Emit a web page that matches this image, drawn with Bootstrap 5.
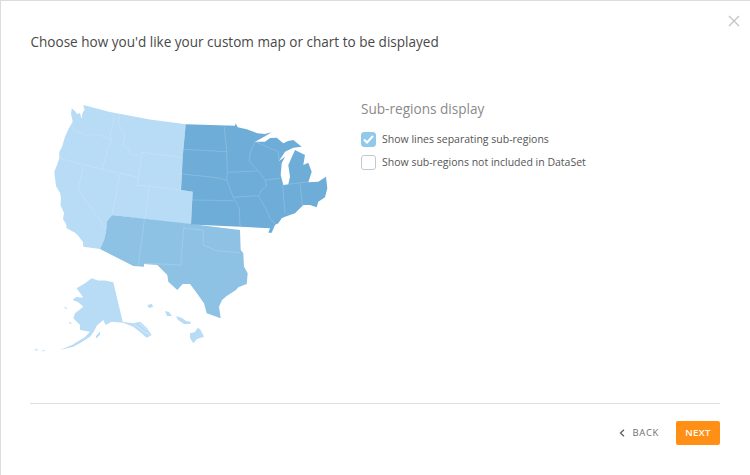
<!doctype html>
<html lang="en"><head><meta charset="utf-8"><title>Map display</title>
<link rel="stylesheet" href="https://cdn.jsdelivr.net/npm/bootstrap@5.3.0/dist/css/bootstrap.min.css">
<style>
html,body{height:100%;background:#fff;overflow:hidden}
body{font-family:"Open Sans",sans-serif;color:#4a4a4a}
.dlg{width:750px;height:475px;border:1px solid #dcdcdc;border-bottom:0;border-right:0;padding:0 30px 0 29px;position:relative}
.dlg-x{position:absolute;top:13px;right:9px;width:14px;height:14px;border:0;background:none;padding:0;line-height:0}
.dlg-title{font-size:13.55px;font-weight:400;margin:0;padding-top:32px;height:89px;color:#484848;line-height:19px;padding-left:.5px}
.mapbox{width:331px;flex:none}
.mapsvg{display:block}
.subhead{font-size:13.6px;font-weight:400;color:#8a8a8a;margin:10px 0 10px;line-height:18px}
.opt{font-size:10.5px;color:#555;height:23px;gap:6px}
.tick{width:15px;height:15px;border-radius:3px;border:1px solid #c8c8c8;background:#fff;flex:none;margin:0;display:block}
.tick.on{background:#92c8ea;border-color:#92c8ea}
.foot{border-top:1px solid #e0e0e0;height:72px;margin-top:auto;gap:17px;padding-top:17px}
.backbtn{font-size:9.5px;letter-spacing:.65px;color:#707070;padding:0;border:0;gap:7px;height:24px}
.nextbtn{background:#ff9015;color:#fff;font-size:9.5px;font-weight:600;letter-spacing:.4px;width:44px;height:24px;padding:0;border:0;border-radius:2px}
.nextbtn:hover{background:#ff9015;color:#fff}
</style></head><body>
<div class="dlg d-flex flex-column">
<button class="dlg-x" aria-label="Close"><svg width="12" height="12" viewBox="0 0 12 12"><path d="M1 1l10 10M11 1L1 11" stroke="#c4c4c4" stroke-width="1.3" fill="none"/></svg></button>
<h1 class="dlg-title">Choose how you'd like your custom map or chart to be displayed</h1>
<div class="d-flex flex-grow-1">
<div class="mapbox">
<svg class="mapsvg" width="310" height="270" viewBox="30 90 310 270">
<g fill="#b8dbf6">
<path d="M71.7 108.3L75 111L77 114L80 113L81.5 119L82.5 113L84.5 110L83.3 105L110 112L150 119.5L185.7 124.3L182.7 157L180.7 190L192.7 191.7L191 224.5L111.7 215L106.7 221.7L106 231.7L104 240L100 249L83.3 246.7L83 242L78 235.5L75 232.7L70 230L66.7 228.3L66 224L63 219L64 213L60.5 205L61 197.5L60 193L56 186L55.5 182L54.3 171.7L57 165L59.3 158.3L59.3 151.7L62 147L65 136.7L68 130L70.7 125L72.7 121.7L71 114Z"/>
<path d="M91.7 278.3L98 280.5L105 280.5L113.3 282.3L122.7 321.7L127 322.5L133.3 323.3L140 321.7L146 327L151.7 335L146.7 337.7L140 332L133.3 326.7L123.3 322.7L111.7 321.7L105.5 325L103.3 320L97 325.5L93.5 332L90 336.7L81 342.5L73.3 346.7L60 350L72 345L85 337L90 331.7L80 330L80 325L73.3 318.3L75 313.3L83.3 306.7L78 302L72.7 300L76 297L83.3 297.7L80 293L76.7 288.3L85 283.3Z"/>
<path d="M190 333.3L195 332L197.5 328L200 329L204 336.7L197 339L193.3 343.3L190 338Z"/>
<path d="M147.3 305L152 304L153 307L149 308Z"/>
<path d="M165 311L169 312L172 316L167 316Z"/>
<path d="M176 316L182 318L186 321L191 322L190 324L184 324L178 320Z"/>
<path d="M63.3 306.5L67.3 308L66 309ZM34 349L38 349.5L37 351ZM41 350L45 350.5L44 351.5ZM69 322L72 323L70 324ZM96 336L100 331.5L100 335L96 338.5Z"/>
</g>
<path fill="none" stroke="#fff" stroke-opacity=".6" stroke-width=".7" d="M134 324L143 331L150 335M139 323L147 330"/>
<path fill="#8dc2e4" d="M111.7 215L191.3 224L240 230L240.7 250L243.3 253.3L244 266.7L247.7 273.3L246.7 284L238.3 287.3L236 290L226.7 296L222 300L219 306.7L220.7 318.3L206.7 313.3L204 303.3L196 292L190 284L182.7 284L177.3 290L168.3 281.7L167.3 275L157.3 265L144 264L144 266.7L133.3 266L100 249L104 240L106 231.7L106.7 221.7Z"/>
<path fill="#6eadd8" d="M185.7 124.3L235 125.7L235.7 123.3L237.7 127.3L246.7 129.3L257.3 133.3L265 134L271.7 132.3L262 138L255 141.7L265 141.7L270 138L276.7 137.7L283.3 143.3L288 141L293.3 140L301.7 146.7L293.3 147.7L285 151.7L279 161L285 156.7L281.7 163.3L280.7 175L283.3 185L288.3 184.3L290 176.7L288.3 165L295 150L305 155L303.3 165L308.3 162.7L311.7 171.7L308.3 182.3L318.3 181.7L326 176.7L327.3 188.3L325 197.3L318.3 201.7L316.7 207.3L310 205L303.3 205L295 213.3L285 216.7L281.7 218.3L278.3 223.3L275 225L271.7 232.7L268.3 232.7L270 228.3L240 226.7L191 224.5L192.7 191.7L181 190L182.7 157Z"/>
<g fill="none" stroke="#fff" stroke-opacity=".2" stroke-width=".8">
<path d="M70.7 125L76.7 131.7L85 135L100 135L111.7 140M115 113.3L110 136.7L111.7 140L106 150.7L107.3 151L102.3 169.3M119.3 114.3L118.3 123.3L125 135L122.7 145L128.3 148.3L131 155L141 155M142.3 152.3L182.7 157.7M142.3 152.3L137.3 185L180.7 190M59.3 158.3L102.3 169.3L138.3 177.3M83.3 166L78.3 189L105 228M120 174L111.7 216.7M149 187.3L145 220"/>
<path d="M144.3 220L138.3 266M184 225L180.7 265M144 263.3L180.7 265M184 228.3L203.3 230L203.3 245L216.7 250.7L240 252.7"/>
<path d="M184.3 149.3L226.7 151.7M182.3 174L216.7 177.7L226.7 180M224.3 126.7L226.7 151.7L227.3 171.7L226.7 180M227.3 172.3L257.3 171M255 141.7L250 153.3L249.3 161.7L258.3 171L265 180L280 178.3M255 141.7L278.3 151.7L279 161M226.7 180L233.3 197.3L258.3 195.7M265 180L266.7 186L261.7 190L258.3 195.7L266.7 210L270 218.3L276 225M192.7 200L233.3 200.7M233.3 197.3L239.3 208.3L240 226.7M282.7 185L285 213.3M300 183.3L302.3 205M282.7 185L308.3 181.7"/>
</g>
</svg>
</div>
<div class="flex-grow-1">
<h2 class="subhead">Sub-regions display</h2>
<div class="d-flex align-items-center opt"><span class="tick on d-flex align-items-center justify-content-center"><svg width="11" height="9" viewBox="0 0 11 9"><path d="M1 4.5L4 7.5L10 1" stroke="#fff" stroke-width="2" fill="none"/></svg></span><span>Show lines separating sub-regions</span></div>
<div class="d-flex align-items-center opt"><span class="tick"></span><span>Show sub-regions not included in DataSet</span></div>
</div>
</div>
<div class="foot d-flex justify-content-end align-items-start">
<button class="btn backbtn d-flex align-items-center"><svg width="6" height="8" viewBox="0 0 6 8"><path d="M5 .8L1.5 4L5 7.2" stroke="#606060" stroke-width="1.3" fill="none"/></svg>BACK</button>
<button class="btn nextbtn">NEXT</button>
</div>
</div>
</body></html>
